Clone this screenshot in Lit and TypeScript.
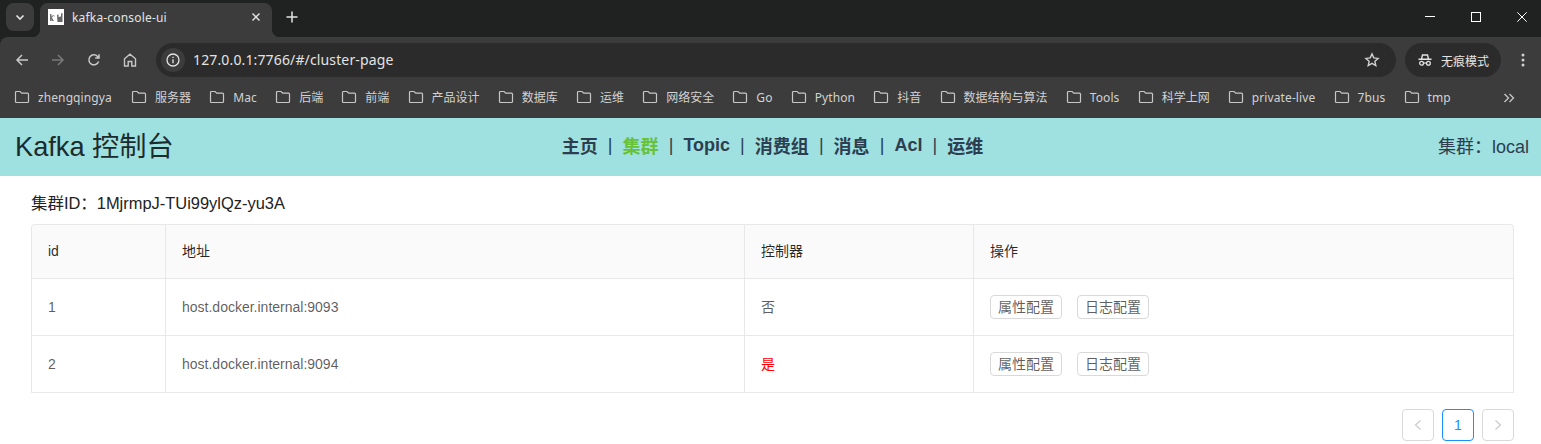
import { LitElement, html, css, svg } from "lit";
import { customElement } from "lit/decorators.js";

const BOOKMARKS = [
	"zhengqingya", "服务器", "Mac", "后端", "前端", "产品设计", "数据库", "运维", "网络安全",
	"Go", "Python", "抖音", "数据结构与算法", "Tools", "科学上网", "private-live", "7bus", "tmp",
];

const NAV = ["主页", "集群", "Topic", "消费组", "消息", "Acl", "运维"];

const BROKERS = [
	{ id: 1, addr: "host.docker.internal:9093", controller: false },
	{ id: 2, addr: "host.docker.internal:9094", controller: true },
];

const folder = svg`<path d="M1.5 3.5 a1 1 0 0 1 1-1 h3.6 l1.6 1.6 h5.8 a1 1 0 0 1 1 1 v7.4 a1 1 0 0 1-1 1 h-11 a1 1 0 0 1-1-1 z" fill="none" stroke="#c7c7c7" stroke-width="1.2"/>`;

@customElement("app-root")
export class AppRoot extends LitElement {
	static override styles = css`
		:host {
			display: block;
			height: 444px;
			overflow: hidden;
			background: #fff;
			font-family: "Liberation Sans", "Noto Sans CJK SC", sans-serif;
		}

		svg { display: block; flex: none; }

		/* browser chrome */
		.chrome { background: #202221; }

		.strip {
			display: flex;
			height: 37px;
			padding-left: 6px;
			box-sizing: border-box;
		}

		.tab-search {
			width: 28px;
			height: 28px;
			margin-top: 3px;
			border-radius: 8px;
			background: #3c3c3c;
			display: grid;
			place-items: center;
		}

		.tab {
			position: relative;
			width: 232px;
			height: 34px;
			margin: 3px 0 0 6px;
			padding: 0 8px 6px 8px;
			box-sizing: border-box;
			background: #3c3c3c;
			border-radius: 8px 8px 0 0;
			display: flex;
			align-items: center;
			color: #e3e3e3;
			font: 12px "Noto Sans", "Noto Sans CJK SC", sans-serif;
		}

		.tab::before, .tab::after {
			content: "";
			position: absolute;
			bottom: 0;
			width: 8px;
			height: 8px;
		}

		.tab::before {
			left: -8px;
			background: radial-gradient(circle at 0 0, transparent 8px, #3c3c3c 8.5px);
		}

		.tab::after {
			right: -8px;
			background: radial-gradient(circle at 100% 0, transparent 8px, #3c3c3c 8.5px);
		}

		.tab-title { margin-left: 8px; flex: 1; letter-spacing: 0.18px; }

		.new-tab { margin: 3px 0 0 12px; height: 28px; display: grid; place-items: center; }

		.win { margin-left: auto; display: flex; align-items: center; padding-right: 14px; gap: 36px; height: 33px; }

		.toolbar {
			display: flex;
			align-items: center;
			height: 43px;
			padding: 6px 0 3px 0;
			box-sizing: border-box;
			background: #3c3c3c;
			border-top-left-radius: 8px;
		}

		.nav-btn { width: 36px; display: grid; place-items: center; flex: none; }
		.nav-btn:first-child { margin-left: 4px; }

		.omni {
			flex: 1;
			height: 34px;
			margin-left: 8px;
			border-radius: 17px;
			background: #2b2b2b;
			display: flex;
			align-items: center;
			padding: 0 16px 0 5px;
			color: #e3e3e3;
			font: 14px "Noto Sans", "Noto Sans CJK SC", sans-serif;
		}

		.omni-info {
			width: 24px;
			height: 24px;
			border-radius: 50%;
			background: #3c3c3c;
			display: grid;
			place-items: center;
			margin-right: 8px;
		}

		.omni-url { flex: 1; padding-bottom: 1px; letter-spacing: 0.14px; }

		.incognito {
			width: 96px;
			height: 34px;
			margin: 0 4px 0 9px;
			border-radius: 17px;
			background: #2b2b2b;
			display: flex;
			align-items: center;
			justify-content: center;
			gap: 8px;
			color: #e3e3e3;
			font: 12px "Noto Sans CJK SC", sans-serif;
		}

		.menu { width: 36px; display: grid; place-items: center; }

		.bookmarks {
			display: flex;
			align-items: center;
			height: 38px;
			padding: 0 0 4px 14px;
			box-sizing: border-box;
			background: #3c3c3c;
			color: #d2d2d2;
			font: 12px "Noto Sans", "Noto Sans CJK SC", sans-serif;
			position: relative;
			gap: 18.2px;
			white-space: nowrap;
		}

		.bookmark { display: flex; align-items: center; gap: 8px; }
		.bookmark:first-child { margin-right: 1px; }
		.bookmark .latin { letter-spacing: 0.1px; }

		.more { position: absolute; right: 24px; top: 10px; }

		/* app header */
		.head {
			height: 58px;
			box-sizing: border-box;
			background: #9fe0e0;
			display: flex;
			align-items: center;
			justify-content: space-between;
			padding: 0 12px 4px 15px;
			color: #2c3e50;
		}

		.brand { font-size: 27.2px; color: #1c2b2b; width: 300px; white-space: nowrap; padding-bottom: 2px; }

		.menu-links { display: flex; align-items: center; font-size: 18px; font-weight: 700; padding-left: 1px; }
		.menu-links a { color: #2c3e50; text-decoration: none; }
		.menu-links a.active { color: #67c23a; }
		.menu-links .sep { font-weight: 400; margin: 0 10.05px; }

		.cluster { font-size: 18px; width: 300px; text-align: right; white-space: nowrap; }

		/* page */
		.page { padding: 16px 27px 0 31px; }

		.cluster-id { font-size: 16.45px; line-height: 22px; color: #222; margin-bottom: 10px; }

		table {
			width: 100%;
			table-layout: fixed;
			border-collapse: separate;
			border-spacing: 0;
			border: 1px solid #e8e8e8;
			border-bottom: 0;
			border-radius: 4px 4px 0 0;
			font-size: 14px;
			line-height: 21px;
			color: rgba(0, 0, 0, 0.65);
		}

		th, td {
			padding: 16px;
			text-align: left;
			font-weight: 400;
			border-bottom: 1px solid #e8e8e8;
			border-right: 1px solid #e8e8e8;
		}

		th:last-child, td:last-child { border-right: 0; }
		th { background: #fafafa; color: rgba(0, 0, 0, 0.85); }
		th:first-child { border-top-left-radius: 4px; }
		th:last-child { border-top-right-radius: 4px; }

		.yes { color: #f00; }

		.ops { display: flex; gap: 15px; }

		button {
			height: 24px;
			padding: 0 7px;
			box-sizing: border-box;
			background: #fff;
			border: 1px solid #d9d9d9;
			border-radius: 4px;
			color: rgba(0, 0, 0, 0.65);
			font: inherit;
			font-size: 14px;
		}

		.pager { display: flex; justify-content: flex-end; gap: 8px; margin-top: 16px; }

		.pager div {
			width: 32px;
			height: 32px;
			box-sizing: border-box;
			border: 1px solid #d9d9d9;
			border-radius: 4px;
			display: grid;
			place-items: center;
			font-size: 14px;
		}

		.pager .current { border-color: #1890ff; color: #1890ff; }
	`;

	private icon(body: unknown, size = 16, view = "0 0 16 16") {
		return html`<svg width="${size}" height="${size}" viewBox="${view}">${body}</svg>`;
	}

	private renderChrome() {
		return html`
			<div class="chrome">
				<div class="strip">
					<div class="tab-search">
						${this.icon(svg`<path d="M4.5 6.5 8 10l3.5-3.5" fill="none" stroke="#e3e3e3" stroke-width="1.7"/>`)}
					</div>
					<div class="tab">
						${this.icon(svg`
							<rect width="16" height="16" fill="#fff"/>
							<path d="M2 5h1.5v2.5L5 6h1L4 8.5 6 12H3.5L3 10v2H2z" fill="#777"/>
							<path d="M5 5.5l2 1.5-1 1z" fill="#aaa"/>
							<path d="M9 6l1.5-.8V8l2.5-.5V4.5L14.5 4v9h-5z" fill="#666"/>
						`)}
						<span class="tab-title">kafka-console-ui</span>
						${this.icon(svg`<path d="M4.5 4.5l7 7m0-7l-7 7" stroke="#e3e3e3" stroke-width="1.4"/>`)}
					</div>
					<div class="new-tab">
						${this.icon(svg`<path d="M8 2.5v11M2.5 8h11" stroke="#e3e3e3" stroke-width="1.5"/>`)}
					</div>
					<div class="win">
						${this.icon(svg`<path d="M0 4.5h10" stroke="#fff"/>`, 10, "0 0 10 10")}
						${this.icon(svg`<rect x=".5" y=".5" width="9" height="9" fill="none" stroke="#fff"/>`, 10, "0 0 10 10")}
						${this.icon(svg`<path d="M.3.3l9.4 9.4m0-9.4L.3 9.7" stroke="#fff"/>`, 10, "0 0 10 10")}
					</div>
				</div>
				<div class="toolbar">
					<div class="nav-btn">
						${this.icon(svg`<path d="M14 8H3M8 3 3 8l5 5" fill="none" stroke="#c7c7c7" stroke-width="1.5"/>`)}
					</div>
					<div class="nav-btn">
						${this.icon(svg`<path d="M2 8h11M8 3l5 5-5 5" fill="none" stroke="#787878" stroke-width="1.5"/>`)}
					</div>
					<div class="nav-btn">
						${this.icon(svg`<path d="M12.6 9.5A5 5 0 1 1 11.6 4.5L13 6M13 2.2V6H9.2" fill="none" stroke="#c7c7c7" stroke-width="1.5"/>`)}
					</div>
					<div class="nav-btn">
						${this.icon(svg`<path d="M2.5 14V6.8L8 2.2l5.5 4.6V14H9.8V9.5H6.2V14z" fill="none" stroke="#c7c7c7" stroke-width="1.4"/>`)}
					</div>
					<div class="omni">
						<div class="omni-info">
							${this.icon(svg`
								<circle cx="8" cy="8" r="6" fill="none" stroke="#e3e3e3" stroke-width="1.3"/>
								<path d="M8 7.2v4M8 4.8v1.3" stroke="#e3e3e3" stroke-width="1.3"/>
							`)}
						</div>
						<span class="omni-url">127.0.0.1:7766/#/cluster-page</span>
						${this.icon(svg`<path d="M8 1.9l1.8 4 4.3.5-3.2 2.9.9 4.3L8 11.4l-3.8 2.2.9-4.3L1.9 6.4l4.3-.5z" fill="none" stroke="#d0d0d0" stroke-width="1.4"/>`)}
					</div>
					<div class="incognito">
						${this.icon(svg`
							<path d="M4.5 7l1-4h5l1 4M1.5 7.3h13" fill="none" stroke="#e3e3e3" stroke-width="1.4"/>
							<circle cx="4.6" cy="11.3" r="1.9" fill="none" stroke="#e3e3e3" stroke-width="1.3"/>
							<circle cx="11.4" cy="11.3" r="1.9" fill="none" stroke="#e3e3e3" stroke-width="1.3"/>
							<path d="M6.5 11h3" stroke="#e3e3e3" stroke-width="1.2"/>
						`)}
						<span>无痕模式</span>
					</div>
					<div class="menu">
						${this.icon(svg`<g fill="#d0d0d0"><circle cx="8" cy="3" r="1.5"/><circle cx="8" cy="8" r="1.5"/><circle cx="8" cy="13" r="1.5"/></g>`)}
					</div>
				</div>
				<div class="bookmarks">
					${BOOKMARKS.map((name) => html`
						<div class="bookmark">
							${this.icon(folder)}
							<span class="${/^[\x00-\x7f]+$/.test(name) ? "latin" : ""}">${name}</span>
						</div>
					`)}
					<div class="more">
						${this.icon(svg`<path d="M3.5 4l4 4-4 4M8.5 4l4 4-4 4" fill="none" stroke="#c7c7c7" stroke-width="1.3"/>`)}
					</div>
				</div>
			</div>
		`;
	}

	override render() {
		return html`
			${this.renderChrome()}
			<header class="head">
				<div class="brand">Kafka 控制台</div>
				<nav class="menu-links">
					${NAV.map((item, i) => html`
						${i > 0 ? html`<span class="sep">|</span>` : ""}
						<a class="${item === "集群" ? "active" : ""}" href="#/">${item}</a>
					`)}
				</nav>
				<div class="cluster">集群：local</div>
			</header>
			<main class="page">
				<div class="cluster-id">集群ID：1MjrmpJ-TUi99ylQz-yu3A</div>
				<table>
					<colgroup>
						<col style="width:134px"><col style="width:579px"><col style="width:229px"><col>
					</colgroup>
					<thead>
						<tr><th>id</th><th>地址</th><th>控制器</th><th>操作</th></tr>
					</thead>
					<tbody>
						${BROKERS.map((b) => html`
							<tr>
								<td>${b.id}</td>
								<td>${b.addr}</td>
								<td class="${b.controller ? "yes" : ""}">${b.controller ? "是" : "否"}</td>
								<td>
									<div class="ops">
										<button>属性配置</button>
										<button>日志配置</button>
									</div>
								</td>
							</tr>
						`)}
					</tbody>
				</table>
				<div class="pager">
					<div>${this.icon(svg`<path d="M9.5 2.5 4.5 7l5 4.5" fill="none" stroke="#c8c8c8" stroke-width="1.1"/>`, 14, "0 0 14 14")}</div>
					<div class="current">1</div>
					<div>${this.icon(svg`<path d="M4.5 2.5 9.5 7l-5 4.5" fill="none" stroke="#c8c8c8" stroke-width="1.1"/>`, 14, "0 0 14 14")}</div>
				</div>
			</main>
		`;
	}
}
